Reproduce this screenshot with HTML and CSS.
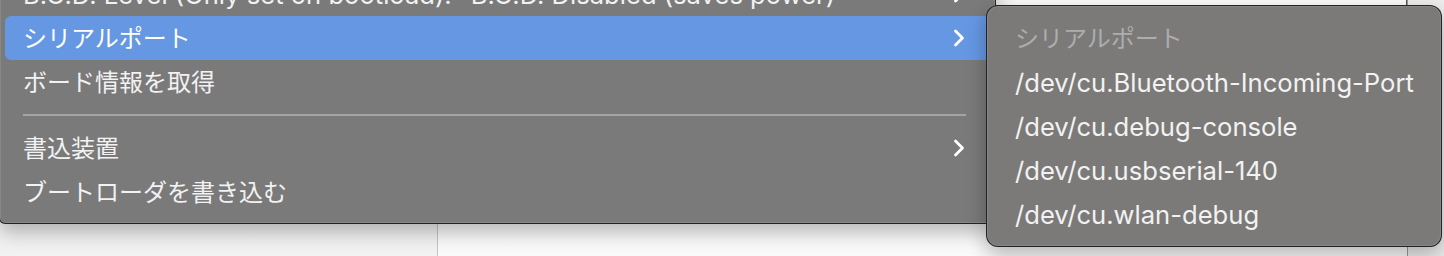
FILE: index.html
```html
<!DOCTYPE html>
<html lang="ja">
<head>
<meta charset="utf-8">
<title>Menu</title>
<link rel="stylesheet" href="styles.css">
</head>
<body>
<div class="backdrop">
  <div class="sidebar"></div>
  <div class="content">
    <div class="topwin"></div>
  </div>
  <div class="rightstrip"></div>
</div>

<div class="menu main-menu">
  <div class="item latin"><span>B.O.D. Level (Only set on bootload): "B.O.D. Disabled (saves power)"</span>
    <svg class="chev" width="14" height="20" viewBox="0 0 14 20"><path d="M3.5 3 L10.5 10 L3.5 17"/></svg></div>
  <div class="item ja active"><span>シリアルポート</span>
    <svg class="chev" width="14" height="20" viewBox="0 0 14 20"><path d="M3.5 3 L10.5 10 L3.5 17"/></svg></div>
  <div class="item ja"><span>ボード情報を取得</span></div>
  <div class="sep"></div>
  <div class="item ja"><span>書込装置</span>
    <svg class="chev" width="14" height="20" viewBox="0 0 14 20"><path d="M3.5 3 L10.5 10 L3.5 17"/></svg></div>
  <div class="item ja"><span>ブートローダを書き込む</span></div>
</div>

<div class="menu sub-menu">
  <div class="item ja title"><span>シリアルポート</span></div>
  <div class="item latin"><span>/dev/cu.Bluetooth-Incoming-Port</span></div>
  <div class="item latin"><span>/dev/cu.debug-console</span></div>
  <div class="item latin"><span>/dev/cu.usbserial-140</span></div>
  <div class="item latin"><span>/dev/cu.wlan-debug</span></div>
</div>
</body>
</html>
```

FILE: styles.css
```css
html, body {
  margin: 0;
  padding: 0;
  width: 1444px;
  height: 256px;
  overflow: hidden;
}
body {
  position: relative;
  background: #f6f6f6;
  font-family: "Inter", "Noto Sans CJK JP", sans-serif;
  color: #f2f2f2;
}

.backdrop {
  display: flex;
  height: 256px;
}
.sidebar {
  width: 437px;
  background: linear-gradient(#dcdcdc, #efefef 40%, #f2f2f2);
  border-right: 1px solid #c4c4c4;
}
.content {
  flex: 1;
  background: linear-gradient(#e2e2e2, #f7f7f7 40%, #fafafa);
  display: flex;
  justify-content: flex-end;
}
.topwin {
  width: 410px;
  height: 5px;
  background: #fbfbfb;
  border-left: 1px solid #555;
  border-right: 1px solid #555;
  border-bottom: 1px solid #555;
}
.rightstrip {
  width: 36px;
  background: #ededed;
  border-left: 1px solid #9a9a9a;
}

.menu {
  position: absolute;
  box-sizing: border-box;
  display: flex;
  flex-direction: column;
  background: #7a7a7a;
  border: 1px solid rgba(20, 20, 20, 0.85);
  box-shadow: inset 0 0 0 1px rgba(255, 255, 255, 0.1), 0 8px 20px rgba(0, 0, 0, 0.28);
}

.main-menu {
  left: -1px;
  top: -34px;
  width: 997px;
  padding: 5px 5px 9px;
  border-radius: 0 0 8px 6px;
}

.sub-menu {
  left: 986px;
  top: 5px;
  width: 456px;
  height: 242px;
  padding: 10px 5px;
  border-radius: 12px;
  background: #7b7a79;
}

.item {
  box-sizing: border-box;
  height: 44px;
  flex: none;
  display: flex;
  align-items: center;
  justify-content: space-between;
  padding: 0 24px 0 18px;
  border-radius: 6px;
  white-space: nowrap;
}
.sub-menu .item {
  padding-left: 23px;
}
.latin {
  font-size: 25.6px;
}
.ja {
  font-size: 24px;
  padding-bottom: 3px;
}
.ja .chev {
  margin-top: 3px;
}
.active {
  background: #6597e3;
  color: #ffffff;
}
.title {
  color: #adadad;
}

.chev {
  display: block;
}
.chev path {
  fill: none;
  stroke: #ffffff;
  stroke-width: 2.8;
  stroke-linecap: round;
  stroke-linejoin: round;
}

.sep {
  height: 22px;
  flex: none;
  display: flex;
  align-items: center;
  padding: 0 24px 0 18px;
}
.sep::before {
  content: "";
  display: block;
  flex: 1;
  height: 2px;
  background: #a4a4a4;
}
```
